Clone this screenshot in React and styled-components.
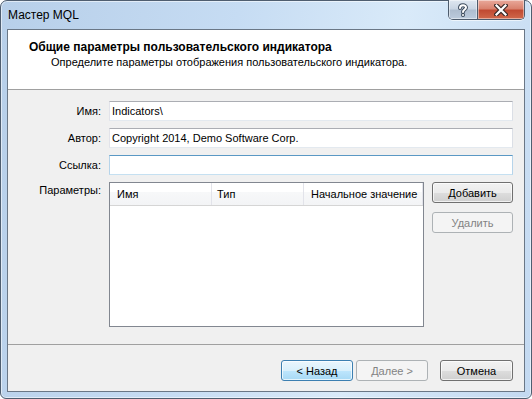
import styled, { createGlobalStyle } from "styled-components";

const GlobalStyle = createGlobalStyle`
    html, body {
        margin: 0;
        padding: 0;
        background: #ffffff;
    }
    * {
        box-sizing: border-box;
    }
`;

const font = `"Liberation Sans", Arial, sans-serif`;

const WindowStyled = styled.div`
    width: 532px;
    height: 399px;
    display: flex;
    flex-direction: column;
    padding: 0 6px 6px 6px;
    border: 1px solid #4f5e70;
    border-radius: 7px 7px 6px 6px;
    background: linear-gradient(100deg, #b7cfe9 0%, #c6dcf3 40%, #d9eaf9 68%, #c3d9f1 100%);
    box-shadow: inset 0 0 0 1px rgba(255, 255, 255, 0.55);
    font-family: ${font};
    font-size: 11px;
    color: #000;
`;

const TitleBar = styled.div`
    height: 28px;
    display: flex;
    align-items: flex-start;
    flex-shrink: 0;

    .TitleBar__text {
        padding-left: 1px;
        line-height: 28px;
        font-size: 12px;
        color: #000;
    }
`;

const CaptionGroup = styled.div`
    margin-left: auto;
    margin-top: -1px;
    display: flex;
    height: 20px;
    border: 1px solid #4d5b6c;
    border-top: none;
    border-radius: 0 0 5px 5px;
    overflow: hidden;
    box-shadow: 0 1px 0 rgba(255, 255, 255, 0.6);
`;

const CaptionButton = styled.div`
    width: ${(p) => p.width}px;
    height: 19px;
    display: flex;
    align-items: center;
    justify-content: center;
    background: ${(p) =>
        p.danger
            ? "linear-gradient(#e9a99b 0%, #d9826f 45%, #c14a32 55%, #d0684b 100%)"
            : "linear-gradient(#dfe7f0 0%, #c9d5e3 45%, #aebdcf 55%, #bccbdc 100%)"};
    box-shadow: inset 0 0 0 1px rgba(255, 255, 255, 0.45);
    & + & {
        border-left: 1px solid #4d5b6c;
    }
`;

const Client = styled.div`
    flex: 1;
    display: flex;
    flex-direction: column;
    border: 1px solid #6a7786;
    background: #f0f0f0;
`;

const Header = styled.div`
    height: 60px;
    flex-shrink: 0;
    background: #ffffff;
    border-bottom: 1px solid #a0a0a0;
    padding: 10px 0 0 21px;

    .Header__title {
        font-weight: bold;
        font-size: 12px;
        line-height: 15px;
    }

    .Header__subtitle {
        padding-left: 22px;
        line-height: 15px;
    }
`;

const Body = styled.div`
    flex: 1;
    display: grid;
    grid-template-columns: 93px 1fr;
    grid-template-rows: 20px 20px 20px 145px;
    column-gap: 8px;
    row-gap: 7px;
    padding: 11px 11px 0 0;
`;

const Label = styled.div`
    text-align: right;
    align-self: ${(p) => (p.top ? "start" : "center")};
    padding-top: ${(p) => (p.top ? "1px" : "0")};
    line-height: 15px;
`;

const TextBox = styled.div`
    height: 20px;
    display: flex;
    align-items: center;
    padding-left: 2px;
    background: #ffffff;
    border: 1px solid;
    border-color: ${(p) =>
        p.focused ? "#5a98c4 #b6d4ea #c5e0f1 #b6d4ea" : "#abadb3 #dbdfe6 #e3e9ef #e2e3ea"};
    white-space: nowrap;
`;

const ParamsRow = styled.div`
    display: flex;
    gap: 8px;
`;

const ListView = styled.div`
    flex: 1;
    border: 1px solid #828790;
    background: #ffffff;
`;

const ListHeader = styled.div`
    display: flex;
    height: 23px;
    border-bottom: 1px solid #d5d5d5;
    background: linear-gradient(#ffffff 0%, #ffffff 42%, #f7f8f9 43%, #f3f4f6 100%);
`;

const HeaderCell = styled.div`
    width: ${(p) => p.width}px;
    padding-left: ${(p) => p.pad}px;
    line-height: 22px;
    border-right: 1px solid #e2e3ea;
    white-space: nowrap;
`;

const SideButtons = styled.div`
    width: 81px;
    display: flex;
    flex-direction: column;
    gap: 9px;
`;

const Button = styled.div`
    width: ${(p) => p.width || 81}px;
    height: 21px;
    display: flex;
    align-items: center;
    justify-content: center;
    border-radius: 3px;
    border: 1px solid ${(p) => (p.primary ? "#3c7fb1" : p.disabled ? "#adb2b5" : "#707070")};
    color: ${(p) => (p.disabled ? "#838383" : "#000000")};
    background: ${(p) =>
        p.primary
            ? "linear-gradient(#eaf6fd 0%, #d9f0fc 50%, #bee6fd 51%, #a7d9f5 100%)"
            : p.disabled
            ? "#f4f4f4"
            : "linear-gradient(#f2f2f2 0%, #ebebeb 50%, #dddddd 51%, #cfcfcf 100%)"};
    box-shadow: inset 0 0 0 1px rgba(255, 255, 255, ${(p) => (p.disabled ? 0 : 0.7)});
`;

const Footer = styled.div`
    height: 47px;
    flex-shrink: 0;
    border-top: 1px solid #a0a0a0;
    display: flex;
    justify-content: flex-end;
    align-items: flex-start;
    padding: 15px 11px 0 0;
`;

const Spacer = styled.div`
    width: ${(p) => p.width}px;
    flex-shrink: 0;
`;

const HelpIcon = () => (
    <svg width="12" height="14" viewBox="0 0 12 14">
        <path d="M3 5 C3 1.5 9 1.5 9 4.5 C9 6.5 6 6.5 6 9" fill="none" stroke="#3d4b5c" strokeWidth="4" strokeLinecap="round" />
        <path d="M3 5 C3 1.5 9 1.5 9 4.5 C9 6.5 6 6.5 6 9" fill="none" stroke="#ffffff" strokeWidth="2" strokeLinecap="round" />
        <circle cx="6" cy="12" r="2" fill="#3d4b5c" />
        <circle cx="6" cy="12" r="1" fill="#ffffff" />
    </svg>
);

const CloseIcon = () => (
    <svg width="14" height="12" viewBox="0 0 14 12">
        <path d="M2.5 1.5 L11.5 10.5 M11.5 1.5 L2.5 10.5" stroke="#3b2a28" strokeWidth="4.5" strokeLinecap="square" />
        <path d="M2.5 1.5 L11.5 10.5 M11.5 1.5 L2.5 10.5" stroke="#ffffff" strokeWidth="2.2" strokeLinecap="square" />
    </svg>
);

const App = () => {
    return (
        <>
            <GlobalStyle />
            <WindowStyled>
                <TitleBar>
                    <span className="TitleBar__text">Мастер MQL</span>
                    <CaptionGroup>
                        <CaptionButton width={28}>
                            <HelpIcon />
                        </CaptionButton>
                        <CaptionButton width={47} danger>
                            <CloseIcon />
                        </CaptionButton>
                    </CaptionGroup>
                </TitleBar>

                <Client>
                    <Header>
                        <div className="Header__title">Общие параметры пользовательского индикатора</div>
                        <div className="Header__subtitle">Определите параметры отображения пользовательского индикатора.</div>
                    </Header>

                    <Body>
                        <Label>Имя:</Label>
                        <TextBox>Indicators\</TextBox>

                        <Label>Автор:</Label>
                        <TextBox>Copyright 2014, Demo Software Corp.</TextBox>

                        <Label>Ссылка:</Label>
                        <TextBox focused></TextBox>

                        <Label top>Параметры:</Label>
                        <ParamsRow>
                            <ListView>
                                <ListHeader>
                                    <HeaderCell width={102} pad={7}>Имя</HeaderCell>
                                    <HeaderCell width={92} pad={5}>Тип</HeaderCell>
                                    <HeaderCell width={119} pad={7}>Начальное значение</HeaderCell>
                                </ListHeader>
                            </ListView>
                            <SideButtons>
                                <Button>Добавить</Button>
                                <Button disabled>Удалить</Button>
                            </SideButtons>
                        </ParamsRow>
                    </Body>

                    <Footer>
                        <Button width={72} primary>&lt; Назад</Button>
                        <Spacer width={3} />
                        <Button width={72} disabled>Далее &gt;</Button>
                        <Spacer width={12} />
                        <Button width={73}>Отмена</Button>
                    </Footer>
                </Client>
            </WindowStyled>
        </>
    );
};

export default App;
